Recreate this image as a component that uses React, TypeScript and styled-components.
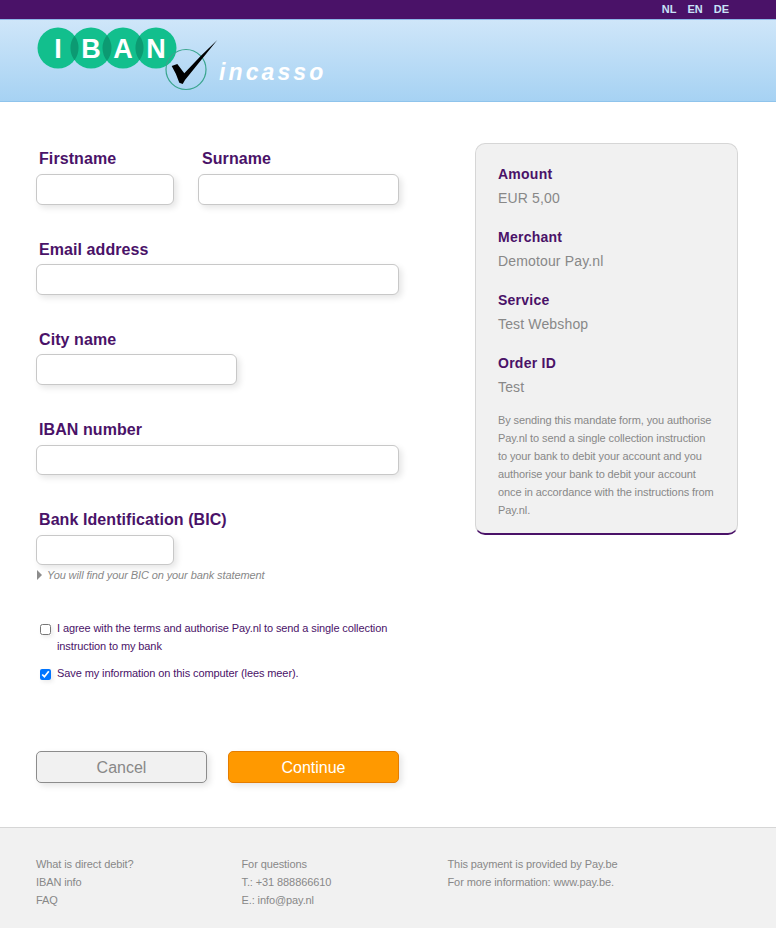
import styled, { createGlobalStyle } from "styled-components";

const GlobalStyle = createGlobalStyle`
  html, body {
    margin: 0;
    padding: 0;
    background: #ffffff;
    font-family: "Liberation Sans", Arial, sans-serif;
  }
  * {
    box-sizing: border-box;
  }
`;

const purple = "#4a1268";
const grey = "#888888";

const Logo = () => (
  <LogoSvg width="300" height="82" viewBox="0 0 300 82">
    <g fill="#12bf8d">
      <circle cx="22" cy="28" r="20.5" />
      <circle cx="55" cy="28" r="20.5" />
      <circle cx="87" cy="28" r="20.5" />
      <circle cx="120" cy="28" r="20.5" />
    </g>
    <g fill="#0c9a72">
      <path d="M38.5 15.8a20.5 20.5 0 0 1 0 24.4a20.5 20.5 0 0 1 0-24.4z" />
      <path d="M71 15.2a20.5 20.5 0 0 1 0 25.6a20.5 20.5 0 0 1 0-25.6z" />
      <path d="M103.5 15.8a20.5 20.5 0 0 1 0 24.4a20.5 20.5 0 0 1 0-24.4z" />
    </g>
    <g fill="#ffffff" fontFamily="'Liberation Sans', Arial, sans-serif" fontWeight="700" fontSize="27" textAnchor="middle">
      <text x="22" y="37.5">I</text>
      <text x="55" y="37.5">B</text>
      <text x="87" y="37.5">A</text>
      <text x="120" y="37.5">N</text>
    </g>
    <circle cx="150" cy="49.5" r="20" fill="none" stroke="#3aa58e" strokeWidth="1.2" />
    <path d="M135.7 46 L141.3 44 L148.3 53.3 Q165 35 181.3 20 Q166 39 149 60 L146.7 64 L143.3 62.7 Q140 53 135.7 46 Z" fill="#000000" />
    <text x="183" y="60" fill="#ffffff" fontFamily="'Liberation Sans', Arial, sans-serif" fontStyle="italic" fontWeight="700" fontSize="23" letterSpacing="3.1">incasso</text>
  </LogoSvg>
);

interface FieldProps {
  label: string;
  width: number;
  labelTop?: number;
  indent?: number;
  inputHeight?: number;
  boxHeight?: number;
}

const Field = ({ label, width, labelTop = 8, indent = 3, inputHeight = 31, boxHeight = 90 }: FieldProps) => (
  <FieldBox $width={width} $height={boxHeight}>
    <FieldLabel $top={labelTop} $indent={indent}>{label}</FieldLabel>
    <TextInput type="text" $height={inputHeight} />
  </FieldBox>
);

const App = () => {
  return (
    <>
      <GlobalStyle />
      <TopBar>
        <LangLink>NL</LangLink>
        <LangLink>EN</LangLink>
        <LangLink>DE</LangLink>
      </TopBar>
      <Header>
        <Logo />
      </Header>
      <Main>
        <Form>
          <FieldRow>
            <Field label="Firstname" width={138} labelTop={7} />
            <Field label="Surname" width={201} labelTop={7} indent={4} />
          </FieldRow>
          <Field label="Email address" width={363} />
          <Field label="City name" width={201} boxHeight={91} />
          <Field label="IBAN number" width={363} labelTop={7} inputHeight={30} />
          <Field label="Bank Identification (BIC)" width={138} labelTop={7} inputHeight={30} />
          <Hint>You will find your BIC on your bank statement</Hint>
          <Checks>
            <CheckRow>
              <CheckBox type="checkbox" />
              <span>I agree with the terms and authorise Pay.nl to send a single collection instruction to my bank</span>
            </CheckRow>
            <CheckRow>
              <CheckBox type="checkbox" defaultChecked />
              <span>Save my information on this computer (lees meer).</span>
            </CheckRow>
          </Checks>
          <Buttons>
            <CancelButton type="button">Cancel</CancelButton>
            <ContinueButton type="button">Continue</ContinueButton>
          </Buttons>
        </Form>
        <SideCard>
          <InfoTitle>Amount</InfoTitle>
          <InfoValue>EUR 5,00</InfoValue>
          <InfoTitle>Merchant</InfoTitle>
          <InfoValue>Demotour Pay.nl</InfoValue>
          <InfoTitle>Service</InfoTitle>
          <InfoValue>Test Webshop</InfoValue>
          <InfoTitle>Order ID</InfoTitle>
          <InfoValue>Test</InfoValue>
          <InfoNote>
            By sending this mandate form, you authorise Pay.nl to send a single collection instruction to your bank to
            debit your account and you authorise your bank to debit your account once in accordance with the
            instructions from Pay.nl.
          </InfoNote>
        </SideCard>
      </Main>
      <Footer>
        <FooterColumn>
          <div>What is direct debit?</div>
          <div>IBAN info</div>
          <div>FAQ</div>
        </FooterColumn>
        <FooterColumn>
          <div>For questions</div>
          <div>T.: +31 888866610</div>
          <div>E.: info@pay.nl</div>
        </FooterColumn>
        <FooterColumn>
          <div>This payment is provided by Pay.be</div>
          <div>For more information: www.pay.be.</div>
        </FooterColumn>
      </Footer>
    </>
  );
};

export default App;

const TopBar = styled.div`
  height: 20px;
  background-color: ${purple};
  border-bottom: 1px solid #8db8e8;
  display: flex;
  justify-content: flex-end;
  align-items: center;
  gap: 11px;
  padding: 0 47px 2px 0;
`;

const LangLink = styled.a`
  font-size: 11px;
  font-weight: 700;
  color: #c9e3f8;
`;

const Header = styled.div`
  height: 82px;
  background: linear-gradient(to bottom, #cfe6f9, #a6d2f3);
  border-bottom: 1px solid #8fc4ec;
`;

const LogoSvg = styled.svg`
  display: block;
  margin-left: 36px;
`;

const Main = styled.div`
  height: 725px;
  display: flex;
  align-items: flex-start;
  justify-content: space-between;
  padding: 41px 38px 0 36px;
`;

const Form = styled.form`
  width: 363px;
`;

const FieldRow = styled.div`
  display: flex;
  gap: 24px;
`;

const FieldBox = styled.div<{ $width: number; $height: number }>`
  width: ${(props) => props.$width}px;
  height: ${(props) => props.$height}px;
`;

const FieldLabel = styled.label<{ $top: number; $indent: number }>`
  display: block;
  height: 31px;
  padding: ${(props) => props.$top}px 0 0 ${(props) => props.$indent}px;
  font-size: 16px;
  line-height: 18px;
  font-weight: 700;
  letter-spacing: 0.08px;
  color: ${purple};
  white-space: nowrap;
`;

const TextInput = styled.input<{ $height: number }>`
  display: block;
  width: 100%;
  height: ${(props) => props.$height}px;
  background: #ffffff;
  border: 1px solid #c8c8c8;
  border-radius: 6px;
  box-shadow: 3px 3px 6px rgba(0, 0, 0, 0.1);
  outline: none;
`;

const Hint = styled.div`
  position: relative;
  margin-top: -28px;
  padding-left: 11px;
  font-size: 11px;
  line-height: 18px;
  font-style: italic;
  letter-spacing: -0.1px;
  color: ${grey};

  &::before {
    content: "";
    position: absolute;
    left: 1px;
    top: 4px;
    border-left: 5px solid #8c8c8c;
    border-top: 5px solid transparent;
    border-bottom: 5px solid transparent;
  }
`;

const Checks = styled.div`
  margin-top: 35px;
  display: flex;
  flex-direction: column;
  gap: 9px;
`;

const CheckRow = styled.label`
  display: flex;
  align-items: flex-start;
  padding-left: 4px;
  font-size: 11px;
  line-height: 18px;
  letter-spacing: -0.1px;
  color: ${purple};
`;

const CheckBox = styled.input`
  flex: none;
  width: 11px;
  height: 11px;
  margin: 5px 6px 0 0;
  box-shadow: 2px 2px 4px rgba(0, 0, 0, 0.08);
`;

const Buttons = styled.div`
  margin-top: 69px;
  display: flex;
  justify-content: space-between;
`;

const CancelButton = styled.button`
  width: 171px;
  height: 32px;
  padding: 1px 0 0;
  font-family: inherit;
  font-size: 16px;
  color: ${grey};
  background: #f1f1f1;
  border: 1px solid #8c8c8c;
  border-radius: 5px;
  box-shadow: 3px 3px 6px rgba(0, 0, 0, 0.1);
`;

const ContinueButton = styled(CancelButton)`
  color: #ffffff;
  background: #ff9900;
  border-color: #e57d00;
`;

const SideCard = styled.aside`
  width: 263px;
  height: 392px;
  padding: 21px 22px 0;
  background: #f1f1f1;
  border: 1px solid #d6d6d6;
  border-bottom: 2px solid ${purple};
  border-radius: 10px;
`;

const InfoTitle = styled.div`
  font-size: 14px;
  line-height: 18px;
  font-weight: 700;
  letter-spacing: 0.25px;
  color: ${purple};
`;

const InfoValue = styled.div`
  margin: 6px 0 21px;
  font-size: 14px;
  line-height: 18px;
  letter-spacing: 0.15px;
  color: ${grey};
`;

const InfoNote = styled.div`
  margin-top: -6px;
  font-size: 11px;
  line-height: 18px;
  letter-spacing: -0.1px;
  color: ${grey};
`;

const Footer = styled.div`
  height: 101px;
  display: flex;
  padding: 27px 0 0 36px;
  background: #f1f1f1;
  border-top: 1px solid #d6d6d6;
`;

const FooterColumn = styled.div`
  width: 206px;
  font-size: 11px;
  line-height: 18px;
  letter-spacing: -0.1px;
  color: ${grey};

  &:first-child {
    width: 205.5px;
  }
`;
